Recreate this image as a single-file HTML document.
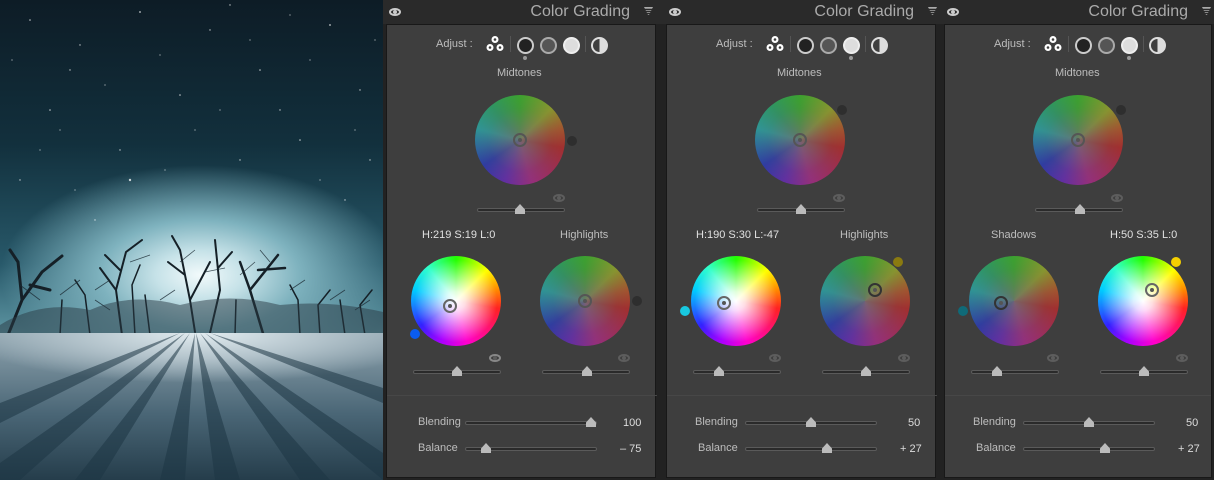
<!DOCTYPE html>
<html><head><meta charset="utf-8"><style>
*{margin:0;padding:0;box-sizing:border-box}
body{width:1214px;height:480px;background:#1c1c1c;position:relative;overflow:hidden;font-family:"Liberation Sans",sans-serif}
.photo{position:absolute;left:0;top:0;width:383px;height:480px;overflow:hidden;
background:radial-gradient(ellipse 200px 110px at 200px 275px,#f2fafb 0%,#c6e2e8 22%,#7eb2be 50%,rgba(60,110,125,0) 100%),linear-gradient(#0d1c26 0%,#12303d 30%,#28596a 55%,#5f97a4 70%)}
.snow{position:absolute;left:0;top:333px;width:383px;height:147px;
background:radial-gradient(ellipse 240px 50px at 200px 0px,#e2ecf0,#b4c4cc 50%,rgba(120,140,155,0) 100%),linear-gradient(#8ea3ae,#4a6676 55%,#253d4b)}
.panel{position:absolute;top:0;height:480px;background:#222}
.hdr{position:absolute;left:0;top:0;right:0;height:24px;background:#2a2a2a}
.body{position:absolute;left:3px;top:24px;width:270px;height:454px;background:#3e3e3e;border:1px solid #181818}
.t{position:absolute;font-size:11px;color:#bdbdbd;white-space:nowrap;line-height:12px}
.title{position:absolute;font-size:16px;color:#aaa;top:3px;right:33px}
.wheel{position:absolute;width:90px;height:90px;border-radius:50%;
background:radial-gradient(circle,#fff 0%,rgba(255,255,255,.85) 15%,rgba(255,255,255,0) 65%),conic-gradient(#2f0 0deg,#ff0 45deg,#f80 75deg,#f22 100deg,#f0c 165deg,#a0f 200deg,#32f 235deg,#0cf 285deg,#3fc 320deg,#2f0 360deg)}
.mut{background:radial-gradient(circle,rgba(110,110,110,.85) 0%,rgba(90,90,90,.35) 50%,rgba(60,60,60,.1) 100%),conic-gradient(#3b2 0deg,#9a2 45deg,#b52 75deg,#b22 100deg,#a28 165deg,#62b 200deg,#23b 235deg,#2aa 285deg,#2a6 320deg,#3b2 360deg)}
.ring{position:absolute;width:14px;height:14px;border-radius:50%;border:2px solid #555;margin:-7px 0 0 -7px}
.ring::after{content:"";position:absolute;left:3px;top:3px;width:4px;height:4px;border-radius:50%;background:#555}
.dot{position:absolute;width:10px;height:10px;border-radius:50%;margin:-5px 0 0 -5px}
.track{position:absolute;height:4px;background:#2a2a2a;border:1px solid #5a5a5a;border-radius:2px}
.thumb{position:absolute;width:10px;height:10px;margin:-6px 0 0 -5px;background:#bbb;clip-path:polygon(50% 0,100% 55%,100% 100%,0 100%,0 55%)}
.eye{position:absolute;width:12px;height:8px;border:2px solid #5d5d5d;border-radius:50%;margin:-4px 0 0 -6px}
.eye::after{content:"";position:absolute;left:2px;top:0px;width:4px;height:4px;border-radius:50%;background:#5d5d5d}
.heye{position:absolute;left:6px;top:8px;width:12px;height:8px;border:2px solid #ccc;border-radius:50%}
.heye::after{content:"";position:absolute;left:2px;top:0;width:4px;height:4px;border-radius:50%;background:#ccc}
.tri{position:absolute;right:10px;top:7px;width:9px;height:9px;border-top:1px solid #aaa;clip-path:polygon(0 0,100% 0,50% 100%);background:repeating-linear-gradient(#888 0 1px,transparent 1px 2px)}
.c{position:absolute;width:17px;height:17px;border-radius:50%;margin:-8px 0 0 -8px}
.sep{position:absolute;width:1px;height:16px;background:#555;top:36px}
.div{position:absolute;left:4px;width:270px;top:395px;height:1px;background:#474747}
</style></head><body>
<div class="photo">
<svg width="383" height="480" style="position:absolute;left:0;top:0">
<g fill="#fff" opacity=".75">
<circle cx="30" cy="20" r=".8"/><circle cx="80" cy="45" r=".7"/><circle cx="140" cy="12" r=".9"/><circle cx="210" cy="30" r=".7"/><circle cx="260" cy="70" r=".8"/><circle cx="330" cy="25" r=".9"/><circle cx="360" cy="90" r=".7"/><circle cx="50" cy="110" r=".8"/><circle cx="120" cy="150" r=".7"/><circle cx="300" cy="140" r=".8"/><circle cx="20" cy="180" r=".7"/><circle cx="345" cy="200" r=".7"/><circle cx="180" cy="95" r=".8"/><circle cx="95" cy="220" r=".7"/><circle cx="240" cy="160" r=".7"/><circle cx="130" cy="180" r="1.2"/><circle cx="280" cy="110" r=".7"/><circle cx="70" cy="70" r=".7"/><circle cx="230" cy="5" r=".7"/><circle cx="370" cy="160" r=".7"/>
<circle cx="12" cy="60" r=".6"/><circle cx="105" cy="85" r=".6"/><circle cx="160" cy="55" r=".6"/><circle cx="195" cy="130" r=".6"/><circle cx="250" cy="40" r=".6"/><circle cx="310" cy="60" r=".6"/><circle cx="355" cy="130" r=".6"/><circle cx="40" cy="150" r=".6"/><circle cx="75" cy="190" r=".6"/><circle cx="320" cy="180" r=".6"/><circle cx="165" cy="170" r=".6"/><circle cx="290" cy="15" r=".6"/><circle cx="60" cy="130" r=".6"/><circle cx="220" cy="110" r=".6"/><circle cx="375" cy="40" r=".6"/>
</g>
<g stroke="#152027" fill="none" stroke-linecap="round">
<path d="M6 340 L22 300 L18 262 M22 300 L42 272 M18 262 L10 250 M42 272 L62 256 M30 285 L50 290" stroke-width="3"/>
<path d="M122 335 L116 290 L126 252 M116 290 L100 268 M126 252 L142 240 M120 270 L105 255" stroke-width="2"/>
<path d="M195 332 L190 300 L180 250 M190 300 L210 262 M180 250 L172 236 M185 275 L168 262" stroke-width="2"/>
<path d="M265 340 L250 290 L240 262 M250 290 L278 255 M258 270 L285 268" stroke-width="2.5"/>
<path d="M210 333 L220 290 L215 240 M218 268 L232 252" stroke-width="2"/>
<path d="M135 335 L132 285 L140 265 M150 335 L145 295 M90 335 L85 295 L75 280 M60 335 L62 300 M300 335 L298 300 L290 285 M320 335 L318 305 L330 290 M345 335 L340 300 M365 335 L360 305 L372 290 M235 335 L236 300" stroke-width="1.5"/>
</g>
<g stroke="#1c2a33" fill="none" stroke-width=".8" opacity=".8">
<path d="M40 300 L20 285 M60 295 L80 280 M110 280 L95 290 M130 262 L150 255 M180 262 L195 250 M205 272 L225 268 M240 275 L255 262 M270 262 L260 250 M290 290 L305 280 M330 300 L345 290 M355 310 L370 300 M95 300 L110 310 M160 300 L175 290"/>
</g>
<path d="M0 325 Q40 300 90 310 Q130 292 180 305 Q230 292 280 305 Q330 300 383 312 L383 335 L0 335Z" fill="#2a3a44" opacity=".5"/>
</svg>
<div class="snow"></div>
<svg width="383" height="147" style="position:absolute;left:0;top:333px" opacity=".55">
<g fill="#1d3644">
<path d="M195 0 L185 147 L160 147Z"/><path d="M196 0 L215 147 L240 147Z"/><path d="M190 0 L100 147 L75 147Z"/><path d="M200 0 L300 147 L330 147Z"/><path d="M185 0 L20 147 L0 147 L0 130Z"/><path d="M205 0 L383 120 L383 147Z"/><path d="M180 0 L0 70 L0 90Z"/><path d="M210 0 L383 55 L383 70Z"/>
</g></svg>
</div>

<!-- PANEL 1 -->
<div class="panel" style="left:383px;width:280px">
<div class="hdr"><div class="heye"></div><div class="title">Color Grading</div><div class="tri"></div></div>
<div class="body"></div><div class="div"></div>
<div class="t" style="left:53px;top:38px">Adjust :</div>
<svg style="position:absolute;left:103px;top:35px" width="18" height="18"><circle cx="9" cy="4.5" r="3.5" fill="#fff"/><circle cx="4" cy="12.5" r="3.5" fill="#fff"/><circle cx="14" cy="12.5" r="3.5" fill="#fff"/><circle cx="9" cy="4.5" r="1.3" fill="#3e3e3e"/><circle cx="4" cy="12.5" r="1.3" fill="#3e3e3e"/><circle cx="14" cy="12.5" r="1.3" fill="#3e3e3e"/></svg>
<div class="sep" style="left:127px"></div>
<div class="c" style="left:142px;top:45px;background:#222;border:2px solid #ccc"></div>
<div class="c" style="left:165px;top:45px;background:#555;border:2px solid #aaa"></div>
<div class="c" style="left:188px;top:45px;background:#ddd;border:2px solid #eee"></div>
<div class="sep" style="left:202px"></div>
<div class="c" style="left:216px;top:45px;border:2px solid #ddd;background:linear-gradient(90deg,#3e3e3e 50%,#ddd 50%)"></div>
<div class="dot" style="left:142px;top:58px;width:4px;height:4px;margin:-2px;background:#999"></div>
<div class="t" style="left:114px;top:67px">Midtones</div>
<div class="wheel mut" style="left:92px;top:95px"></div>
<div class="ring" style="left:137px;top:140px"></div>
<div class="dot" style="left:189px;top:141px;background:#2e2e2e"></div>
<div class="eye" style="left:176px;top:198px"></div>
<div class="track" style="left:94px;top:208px;width:88px"></div><div class="thumb" style="left:137px;top:210px"></div>
<div class="t" style="left:39px;top:229px;color:#e0e0e0">H:219 S:19 L:0</div>
<div class="t" style="left:177px;top:229px">Highlights</div>
<div class="wheel" style="left:28px;top:256px"></div>
<div class="ring" style="left:67px;top:306px;border-color:#666"></div>
<div class="dot" style="left:32px;top:334px;background:#0a5cf0"></div>
<div class="wheel mut" style="left:157px;top:256px"></div>
<div class="ring" style="left:202px;top:301px"></div>
<div class="dot" style="left:254px;top:301px;background:#2e2e2e"></div>
<div class="eye" style="left:112px;top:358px;border-color:#888"></div>
<div class="eye" style="left:241px;top:358px"></div>
<div class="track" style="left:30px;top:370px;width:88px"></div><div class="thumb" style="left:74px;top:372px"></div>
<div class="track" style="left:159px;top:370px;width:88px"></div><div class="thumb" style="left:204px;top:372px"></div>
<div class="t" style="left:35px;top:416px">Blending</div>
<div class="track" style="left:82px;top:421px;width:132px"></div><div class="thumb" style="left:208px;top:423px"></div>
<div class="t" style="left:240px;top:417px;color:#ddd">100</div>
<div class="t" style="left:35px;top:442px">Balance</div>
<div class="track" style="left:82px;top:447px;width:132px"></div><div class="thumb" style="left:103px;top:449px"></div>
<div class="t" style="left:237px;top:443px;color:#ddd">– 75</div>
</div>

<!-- PANEL 2 -->
<div class="panel" style="left:663px;width:278px">
<div class="hdr"><div class="heye"></div><div class="title" style="right:27px">Color Grading</div><div class="tri" style="right:4px"></div></div>
<div class="body"></div><div class="div"></div>
<div class="t" style="left:53px;top:38px">Adjust :</div>
<svg style="position:absolute;left:103px;top:35px" width="18" height="18"><circle cx="9" cy="4.5" r="3.5" fill="#fff"/><circle cx="4" cy="12.5" r="3.5" fill="#fff"/><circle cx="14" cy="12.5" r="3.5" fill="#fff"/><circle cx="9" cy="4.5" r="1.3" fill="#3e3e3e"/><circle cx="4" cy="12.5" r="1.3" fill="#3e3e3e"/><circle cx="14" cy="12.5" r="1.3" fill="#3e3e3e"/></svg>
<div class="sep" style="left:127px"></div>
<div class="c" style="left:142px;top:45px;background:#222;border:2px solid #ccc"></div>
<div class="c" style="left:165px;top:45px;background:#555;border:2px solid #aaa"></div>
<div class="c" style="left:188px;top:45px;background:#ddd;border:2px solid #eee"></div>
<div class="sep" style="left:202px"></div>
<div class="c" style="left:216px;top:45px;border:2px solid #ddd;background:linear-gradient(90deg,#3e3e3e 50%,#ddd 50%)"></div>
<div class="dot" style="left:188px;top:58px;width:4px;height:4px;margin:-2px;background:#999"></div>
<div class="t" style="left:114px;top:67px">Midtones</div>
<div class="wheel mut" style="left:92px;top:95px"></div>
<div class="ring" style="left:137px;top:140px"></div>
<div class="dot" style="left:179px;top:110px;background:#2e2e2e"></div>
<div class="eye" style="left:176px;top:198px"></div>
<div class="track" style="left:94px;top:208px;width:88px"></div><div class="thumb" style="left:138px;top:210px"></div>
<div class="t" style="left:33px;top:229px;color:#e0e0e0">H:190 S:30 L:-47</div>
<div class="t" style="left:177px;top:229px">Highlights</div>
<div class="wheel" style="left:28px;top:256px"></div>
<div class="ring" style="left:61px;top:303px;border-color:#666"></div>
<div class="dot" style="left:22px;top:311px;background:#18c8e0"></div>
<div class="wheel mut" style="left:157px;top:256px"></div>
<div class="ring" style="left:212px;top:290px;border-color:#333"></div>
<div class="dot" style="left:235px;top:262px;background:#8a7a10"></div>
<div class="eye" style="left:112px;top:358px"></div>
<div class="eye" style="left:241px;top:358px"></div>
<div class="track" style="left:30px;top:370px;width:88px"></div><div class="thumb" style="left:56px;top:372px"></div>
<div class="track" style="left:159px;top:370px;width:88px"></div><div class="thumb" style="left:203px;top:372px"></div>
<div class="t" style="left:32px;top:416px">Blending</div>
<div class="track" style="left:82px;top:421px;width:132px"></div><div class="thumb" style="left:148px;top:423px"></div>
<div class="t" style="left:245px;top:417px;color:#ddd">50</div>
<div class="t" style="left:35px;top:442px">Balance</div>
<div class="track" style="left:82px;top:447px;width:132px"></div><div class="thumb" style="left:164px;top:449px"></div>
<div class="t" style="left:237px;top:443px;color:#ddd">+ 27</div>
</div>

<!-- PANEL 3 -->
<div class="panel" style="left:941px;width:273px">
<div class="hdr"><div class="heye"></div><div class="title" style="right:26px">Color Grading</div><div class="tri" style="right:3px"></div></div>
<div class="body" style="width:268px"></div><div class="div" style="width:266px"></div>
<div class="t" style="left:53px;top:38px">Adjust :</div>
<svg style="position:absolute;left:103px;top:35px" width="18" height="18"><circle cx="9" cy="4.5" r="3.5" fill="#fff"/><circle cx="4" cy="12.5" r="3.5" fill="#fff"/><circle cx="14" cy="12.5" r="3.5" fill="#fff"/><circle cx="9" cy="4.5" r="1.3" fill="#3e3e3e"/><circle cx="4" cy="12.5" r="1.3" fill="#3e3e3e"/><circle cx="14" cy="12.5" r="1.3" fill="#3e3e3e"/></svg>
<div class="sep" style="left:127px"></div>
<div class="c" style="left:142px;top:45px;background:#222;border:2px solid #ccc"></div>
<div class="c" style="left:165px;top:45px;background:#555;border:2px solid #aaa"></div>
<div class="c" style="left:188px;top:45px;background:#ddd;border:2px solid #eee"></div>
<div class="sep" style="left:202px"></div>
<div class="c" style="left:216px;top:45px;border:2px solid #ddd;background:linear-gradient(90deg,#3e3e3e 50%,#ddd 50%)"></div>
<div class="dot" style="left:188px;top:58px;width:4px;height:4px;margin:-2px;background:#999"></div>
<div class="t" style="left:114px;top:67px">Midtones</div>
<div class="wheel mut" style="left:92px;top:95px"></div>
<div class="ring" style="left:137px;top:140px"></div>
<div class="dot" style="left:180px;top:110px;background:#2e2e2e"></div>
<div class="eye" style="left:176px;top:198px"></div>
<div class="track" style="left:94px;top:208px;width:88px"></div><div class="thumb" style="left:139px;top:210px"></div>
<div class="t" style="left:50px;top:229px">Shadows</div>
<div class="t" style="left:169px;top:229px;color:#e0e0e0">H:50 S:35 L:0</div>
<div class="wheel mut" style="left:28px;top:256px"></div>
<div class="ring" style="left:60px;top:303px;border-color:#333"></div>
<div class="dot" style="left:22px;top:311px;background:#0f6a78"></div>
<div class="wheel" style="left:157px;top:256px"></div>
<div class="ring" style="left:211px;top:290px;border-color:#666"></div>
<div class="dot" style="left:235px;top:262px;background:#f5d000"></div>
<div class="eye" style="left:112px;top:358px"></div>
<div class="eye" style="left:241px;top:358px"></div>
<div class="track" style="left:30px;top:370px;width:88px"></div><div class="thumb" style="left:56px;top:372px"></div>
<div class="track" style="left:159px;top:370px;width:88px"></div><div class="thumb" style="left:203px;top:372px"></div>
<div class="t" style="left:32px;top:416px">Blending</div>
<div class="track" style="left:82px;top:421px;width:132px"></div><div class="thumb" style="left:148px;top:423px"></div>
<div class="t" style="left:245px;top:417px;color:#ddd">50</div>
<div class="t" style="left:35px;top:442px">Balance</div>
<div class="track" style="left:82px;top:447px;width:132px"></div><div class="thumb" style="left:164px;top:449px"></div>
<div class="t" style="left:237px;top:443px;color:#ddd">+ 27</div>
</div>
</body></html>
